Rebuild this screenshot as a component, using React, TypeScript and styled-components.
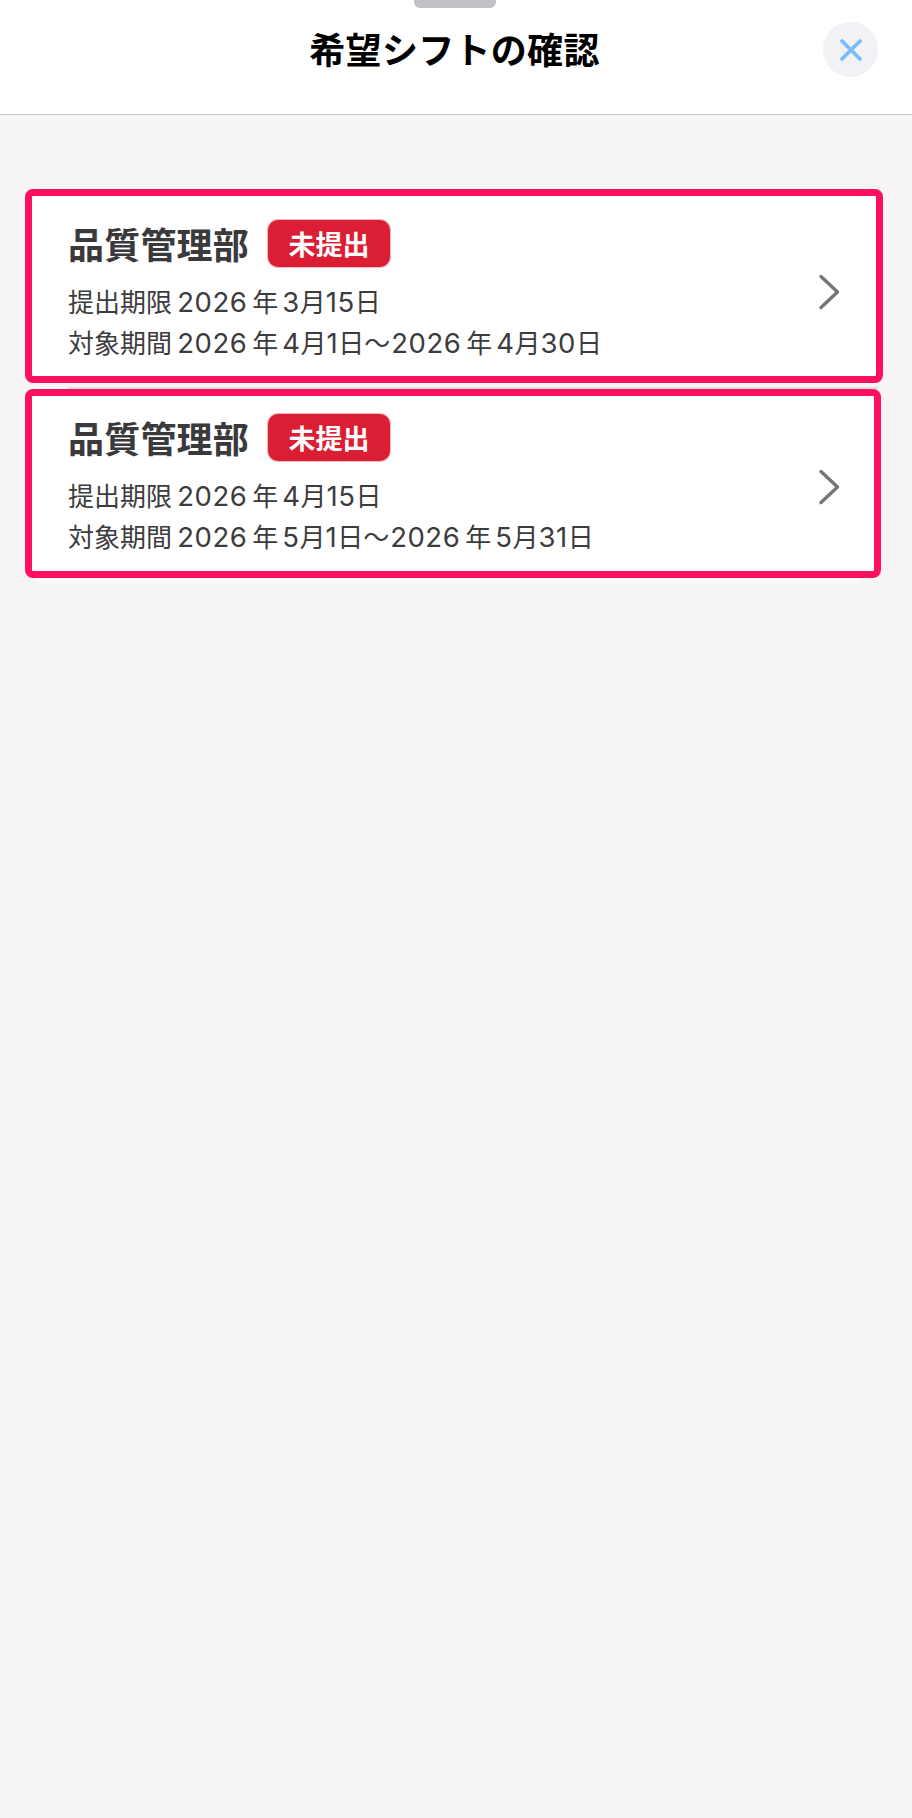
import React from 'react';
import styled, { createGlobalStyle } from 'styled-components';

const GlobalStyle = createGlobalStyle`
    html, body {
        margin: 0;
        padding: 0;
        background: #f6f4f5;
    }
    body {
        font-family: "Inter", "Noto Sans CJK JP", sans-serif;
    }
`;

const Page = styled.div`
    width: 912px;
    height: 1818px;
    background: #f6f4f5;
    overflow: hidden;
`;

const Header = styled.header`
    position: relative;
    box-sizing: border-box;
    height: 115px;
    background: #fff;
    border-bottom: 1px solid #c8c6c9;
    display: flex;
    justify-content: center;
    padding-top: 25px;
`;

const Grabber = styled.div`
    position: absolute;
    top: 0;
    left: 414px;
    width: 82px;
    height: 8px;
    background: #c2c2c6;
    border-radius: 0 0 6px 6px;
`;

const Title = styled.h1`
    margin: 0 3px 0 0;
    font-size: 36px;
    line-height: 46px;
    letter-spacing: 0.3px;
    font-weight: 700;
    color: #000;
    font-family: "Noto Sans CJK JP", sans-serif;
`;

const CloseButton = styled.div`
    position: absolute;
    top: 22px;
    right: 34px;
    width: 55px;
    height: 55px;
    border-radius: 50%;
    background: #f2f1f6;
    display: flex;
    align-items: center;
    justify-content: center;
`;

const List = styled.div`
    display: flex;
    flex-direction: column;
    padding: 74px 0 0 25px;
`;

const Card = styled.div<{ $width: number; $height: number; $top: number; $right: number }>`
    box-sizing: border-box;
    width: ${p => p.$width}px;
    height: ${p => p.$height}px;
    background: #fff;
    border: 7px solid #ff0f5f;
    border-radius: 8px;
    display: flex;
    align-items: center;
    justify-content: space-between;
    padding: ${p => p.$top}px ${p => p.$right}px 0 36px;
`;

const Divider = styled.div`
    height: 6px;
    width: 810px;
    margin-left: 43px;
    box-sizing: border-box;
    border-bottom: 2px solid #dcdbdd;
    border-top: 2px solid transparent;
`;

const BottomLip = styled.div`
    width: 826px;
    height: 6px;
    margin-left: 10px;
    background: #fbfafb;
    border-radius: 0 0 14px 14px;
`;

const Body = styled.div<{ $bottom: number }>`
    display: flex;
    flex-direction: column;
    margin-bottom: ${p => p.$bottom}px;
`;

const NameRow = styled.div`
    display: flex;
    align-items: center;
    gap: 19px;
    margin-bottom: 15px;
`;

const Name = styled.span`
    font-size: 36px;
    line-height: 48px;
    letter-spacing: 0.2px;
    font-weight: 700;
    color: #3a3a3c;
    font-family: "Noto Sans CJK JP", sans-serif;
`;

const Badge = styled.span`
    background: #dc1e34;
    color: #fff;
    font-size: 27px;
    line-height: 47px;
    height: 47px;
    width: 122px;
    text-align: center;
    font-weight: 700;
    border-radius: 10px;
    box-shadow: 0 0 0 1px #f3b9c0;
    font-family: "Noto Sans CJK JP", sans-serif;
`;

const Line = styled.div`
    font-size: 26px;
    line-height: 41px;
    word-spacing: -2px;
    color: #3c3c3e;
    white-space: pre;
`;

const Num = styled.span`
    font-size: 27.5px;
    letter-spacing: 0.5px;
`;

const Year = styled.span`
    margin: 0 4px 0 5px;
`;

const Wave = styled.span`
    margin-right: 1px;
`;

const rows = [
    { width: 858, height: 194, top: 12, bottom: 1, right: 36, due: '3', start: '4', end: '4', endDay: '30' },
    { width: 856, height: 189, top: 7, bottom: 3, right: 34, due: '4', start: '5', end: '5', endDay: '31' },
];

const Chevron = () => (
    <svg width="22" height="36" viewBox="0 0 22 36" fill="none">
        <path d="M3 2.5 L19.5 18 L3 33.5" stroke="#767678" strokeWidth="3.4" strokeLinecap="round" strokeLinejoin="round" />
    </svg>
);

const App: React.FC = () => {
    return (
        <Page>
            <GlobalStyle />
            <Header>
                <Grabber />
                <Title>希望シフトの確認</Title>
                <CloseButton>
                    <svg width="26" height="26" viewBox="0 0 26 26" fill="none">
                        <path d="M4 4 L22 22 M22 4 L4 22" stroke="#78bdfb" strokeWidth="3.8" strokeLinecap="round" />
                    </svg>
                </CloseButton>
            </Header>
            <List>
                {rows.map((row, i) => (
                    <React.Fragment key={i}>
                        {i > 0 && <Divider />}
                        <Card $width={row.width} $height={row.height} $top={row.top} $right={row.right}>
                            <Body $bottom={row.bottom}>
                                <NameRow>
                                    <Name>品質管理部</Name>
                                    <Badge>未提出</Badge>
                                </NameRow>
                                <Line>提出期限 <Num>2026</Num><Year>年</Year><Num>{row.due}</Num>月<Num>15</Num>日</Line>
                                <Line>対象期間 <Num>2026</Num><Year>年</Year><Num>{row.start}</Num>月<Num>1</Num>日<Wave>〜</Wave><Num>2026</Num><Year>年</Year><Num>{row.end}</Num>月<Num>{row.endDay}</Num>日</Line>
                            </Body>
                            <Chevron />
                        </Card>
                    </React.Fragment>
                ))}
                <BottomLip />
            </List>
        </Page>
    );
};

export default App;
